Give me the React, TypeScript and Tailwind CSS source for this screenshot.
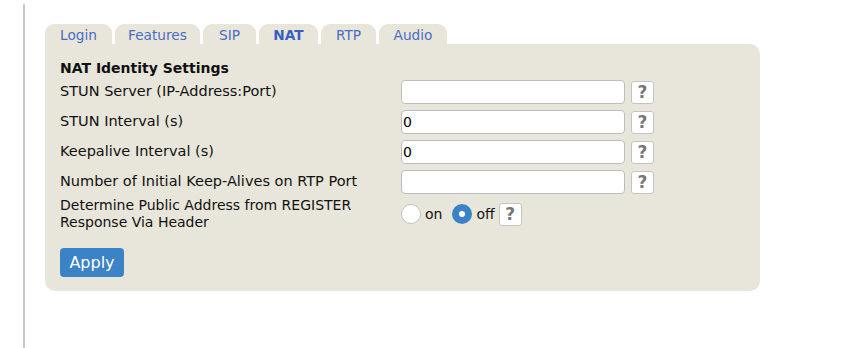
import React from "react";

const tabs: [string, number][] = [
  ["Login", 67],
  ["Features", 85],
  ["SIP", 53],
  ["NAT", 59],
  ["RTP", 55],
  ["Audio", 68],
];

function Help() {
  return (
    <button className="w-[23px] h-[23px] rounded-[3px] border border-[#c4c4c4] bg-white text-[#777] font-bold text-[17px] leading-none flex items-center justify-center">
      ?
    </button>
  );
}

function Field({ value }: { value?: string }) {
  return (
    <div className="flex items-center gap-[6px]">
      <input
        readOnly
        value={value ?? ""}
        className="w-[224px] h-[24px] rounded-[4px] border border-[#bdbdbd] bg-white px-[1px] text-[14px] text-black outline-none"
      />
      <Help />
    </div>
  );
}

export default function App() {
  return (
    <div
      className="w-[861px] h-[348px] bg-white flex"
      style={{ fontFamily: '"DejaVu Sans", Verdana, sans-serif' }}
    >
      <div className="ml-[23px] mt-[4px] w-[2px] h-[344px] bg-[#c8c8c8]" />
      <div className="ml-[20px] mt-[24px] flex flex-col">
        <div className="flex gap-[3px] h-[20px]">
          {tabs.map(([t, w]) => (
            <div
              key={t}
              style={{ width: w }}
              className={`text-center rounded-t-[9px] bg-[#e8e6da] text-[13.7px] leading-[22px] ${
                t === "NAT" ? "font-bold text-[#3a5fc4]" : "text-[#4a6cc6]"
              }`}
            >
              {t}
            </div>
          ))}
        </div>
        <div className="w-[715px] h-[247px] bg-[#e8e6da] rounded-b-[10px] rounded-tr-[10px] pl-[15px] pt-[15px] text-[14.5px] text-[#111]">
          <div className="font-bold text-[14px] h-[18px] leading-[18px]">NAT Identity Settings</div>
          <div className="grid grid-cols-[341px_auto] gap-y-[6px] items-center mt-[3px]">
            <div>STUN Server (IP-Address:Port)</div>
            <Field />
            <div>STUN Interval (s)</div>
            <Field value="0" />
            <div>Keepalive Interval (s)</div>
            <Field value="0" />
            <div>Number of Initial Keep-Alives on RTP Port</div>
            <Field />
            <div className="leading-[17px] text-[14px] -mt-[3px]">
              Determine Public Address from REGISTER
              <br />
              Response Via Header
            </div>
            <div className="flex items-center -mt-[3px]">
              <span className="w-[20px] h-[20px] rounded-full border border-[#c4c4c4] bg-white" />
              <span className="ml-[4px] text-[14px]">on</span>
              <span className="ml-[10px] w-[20px] h-[20px] rounded-full bg-[#3b82c7] flex items-center justify-center">
                <span className="w-[6px] h-[6px] rounded-full bg-white" />
              </span>
              <span className="ml-[4px] text-[14px]">off</span>
              <span className="ml-[4px]">
                <Help />
              </span>
            </div>
          </div>
          <button className="mt-[17px] w-[64px] h-[29px] rounded-[4px] bg-[#3b82c7] text-white text-[16px]">
            Apply
          </button>
        </div>
      </div>
    </div>
  );
}
